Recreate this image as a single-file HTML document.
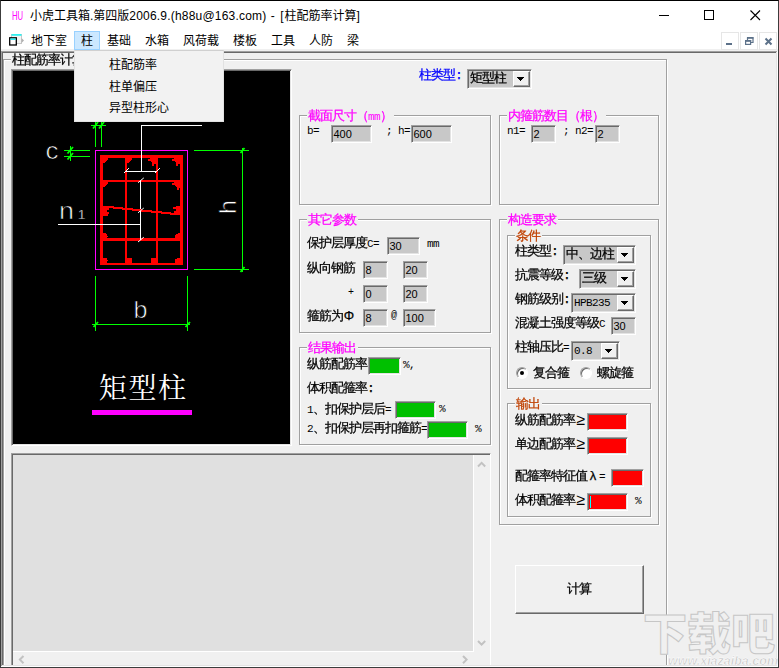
<!DOCTYPE html>
<html lang="zh-CN"><head><meta charset="utf-8"><title>小虎工具箱</title>
<style>
*{box-sizing:border-box;margin:0;padding:0}
html,body{width:779px;height:668px;overflow:hidden;background:#f0f0f0}
body{position:relative;font:12px/12px "Liberation Sans","Noto Sans CJK SC",sans-serif;color:#000}
.a{position:absolute}
.t{position:absolute;white-space:nowrap;font:13px/12px "Liberation Mono","WenQuanYi Zen Hei",monospace;letter-spacing:-1px;-webkit-text-stroke:.25px;color:#000}
.gl i,.t i,.cb i{font-style:normal;font-size:11px;letter-spacing:-.6px;-webkit-text-stroke:0}
.t u{text-decoration:none;display:inline-block;width:12px;text-align:center;letter-spacing:0;font-family:"Liberation Sans","WenQuanYi Zen Hei",sans-serif}
.t u.g{font-size:16px;line-height:12px;vertical-align:-1px;-webkit-text-stroke:0}
.m{color:#f0f}
.o{color:#c04000}
.bl{color:#00f}
.ui{position:absolute;white-space:nowrap;font:12px/12px "Liberation Sans","Noto Sans CJK SC",sans-serif;color:#000}
.gb{position:absolute;border:1px solid #a0a0a0;box-shadow:inset 1px 1px 0 #fff,1px 1px 0 #fff}
.gl{position:absolute;white-space:nowrap;font:13px/12px "Liberation Mono","WenQuanYi Zen Hei",monospace;letter-spacing:-1px;-webkit-text-stroke:.25px;background:#f0f0f0;padding:0 2px 0 1px}
.tb{position:absolute;background:#c8c8c8;border:1px solid;border-color:#a0a0a0 #fff #fff #a0a0a0;box-shadow:inset 1px 1px 0 #696969,inset -1px -1px 0 #e3e3e3;font:11px/11px "Liberation Sans",sans-serif;padding:3px 0 0 1.500px;white-space:nowrap;overflow:hidden}
.cb{position:absolute;background:#c8c8c8;border:1px solid;border-color:#a0a0a0 #fff #fff #a0a0a0;box-shadow:inset 1px 1px 0 #696969,inset -1px -1px 0 #e3e3e3;font:13px/12px "Liberation Mono","WenQuanYi Zen Hei",monospace;letter-spacing:-1px;-webkit-text-stroke:.25px;padding:3px 0 0 2px;white-space:nowrap;overflow:hidden}
.btn{position:absolute;right:1px;top:1px;bottom:1px;width:17px;background:#f0f0f0;border:1px solid;border-color:#fff #696969 #696969 #fff;box-shadow:inset -1px -1px 0 #a0a0a0}
.btn svg{position:absolute;left:3px;top:5px}
.rd{position:absolute;width:12px;height:12px;border-radius:50%;background:#fff;border:1px solid;border-color:#a0a0a0 #fff #fff #a0a0a0;box-shadow:inset 1px 1px 0 #696969}
</style></head>
<body>
<div class="a" style="left:0;top:0;width:779px;height:51px;background:#fff"></div>
<div class="a" style="left:12px;top:10px;font:12px/12px 'Liberation Sans',sans-serif;color:#f0f;transform:scaleX(.64);transform-origin:0 0">HU</div>
<div class="ui" style="left:30px;top:10px;font-size:12px">小虎工具箱.第四版<span style="letter-spacing:.2px">2006.9.(h88u@163.com)</span><span style="letter-spacing:1px"> - [</span>柱配筋率计算]</div>
<svg class="a" style="left:650px;top:5px" width="120" height="20" viewBox="650 5 120 20" shape-rendering="crispEdges"><path d="M659 15.5h10" stroke="#000" fill="none"/><rect x="704.5" y="10.5" width="9" height="9" stroke="#000" fill="none"/><path d="M750.5 10.5l9.5 9.5M760 10.5l-9.5 9.5" stroke="#000" fill="none" shape-rendering="auto" stroke-width="1.1"/></svg>
<div class="a" style="left:1px;top:49px;width:777px;height:2px;background:#f0f0f0"></div>
<svg class="a" style="left:8px;top:33px" width="17" height="13" viewBox="0 0 17 13"><rect x="3.5" y="1.5" width="10" height="9" fill="#f4f4f4" stroke="#c8c8c8"/><rect x="3.500" y="1" width="10" height="1.800" fill="#30f0f0"/><path d="M13.5 5l2.5 2.5-2.5 2.5z" fill="#b0b0b0"/><rect x="1.700" y="4.800" width="6.600" height="7.200" fill="#fff" stroke="#000" stroke-width="1.300"/><rect x="2.300" y="5.500" width="5.400" height="1.300" fill="#00e8f0"/></svg>
<div class="a" style="left:74px;top:31px;width:26px;height:19px;background:#cce8ff;border:1px solid #99d1ff"></div>
<div class="ui" style="left:31px;top:35px">地下室</div>
<div class="ui" style="left:81px;top:35px">柱</div>
<div class="ui" style="left:107px;top:35px">基础</div>
<div class="ui" style="left:145px;top:35px">水箱</div>
<div class="ui" style="left:183px;top:35px">风荷载</div>
<div class="ui" style="left:233px;top:35px">楼板</div>
<div class="ui" style="left:271px;top:35px">工具</div>
<div class="ui" style="left:309px;top:35px">人防</div>
<div class="ui" style="left:347px;top:35px">梁</div>
<div class="a" style="left:721px;top:32px;width:18px;height:18px;border:1px solid #e6e6e6;background:#fff"></div>
<div class="a" style="left:740px;top:32px;width:18px;height:18px;border:1px solid #e6e6e6;background:#fff"></div>
<div class="a" style="left:759px;top:32px;width:18px;height:18px;border:1px solid #e6e6e6;background:#fff"></div>
<svg class="a" style="left:721px;top:32px" width="56" height="18" viewBox="721 32 56 18"><rect x="726" y="43" width="6" height="2" fill="#5c7189"/><path d="M747.5 40v-2.2h5.5v4.7h-2" fill="none" stroke="#5c7189" stroke-width="1.2"/><rect x="747" y="37" width="6.5" height="1.6" fill="#5c7189"/><rect x="745.6" y="40.6" width="5" height="3.8" fill="none" stroke="#5c7189" stroke-width="1.2"/><rect x="745" y="40" width="6.2" height="1.8" fill="#5c7189"/><path d="M765.5 38.5l6 6M771.5 38.5l-6 6" stroke="#5c7189" stroke-width="2" fill="none"/></svg>
<div class="a" style="left:1px;top:51px;width:776px;height:1px;background:#a0a0a0"></div>
<div class="a" style="left:2px;top:52px;width:774px;height:1px;background:#696969"></div>
<div class="a" style="left:1px;top:51px;width:1px;height:615px;background:#a0a0a0"></div>
<div class="a" style="left:2px;top:52px;width:1px;height:613px;background:#696969"></div>
<div class="a" style="left:776px;top:52px;width:1px;height:614px;background:#e3e3e3"></div>
<div class="a" style="left:777px;top:51px;width:1px;height:616px;background:#fff"></div>
<div class="gb" style="left:3px;top:59px;width:664px;height:640px"></div>
<div class="gl" style="left:11px;top:55px;color:#000">柱配筋率计算</div>
<div class="a" style="left:11px;top:69px;width:281px;height:377px;background:#000;border:1px solid;border-color:#a0a0a0 #fff #fff #a0a0a0;box-shadow:inset 1px 1px 0 #696969,inset -1px -1px 0 #e3e3e3"></div>
<svg class="a" style="left:13px;top:71px" width="277" height="373" viewBox="13 71 277 373">
<g shape-rendering="crispEdges" fill="none">
<!-- green dimension lines -->
<g stroke="#00ff00" stroke-width="1">
<path d="M95.500 122v25M101.500 122v25M91 125.500h15"/>
<path d="M64 150.500h26M64 156.500h26M70.500 146v15"/>
<path d="M194 150.500h55M194 269.500h55M242.500 148v124"/>
<path d="M95.500 276v55M187.500 276v55M92 324.500h98"/>
</g>
<!-- magenta outline -->
<rect x="95.500" y="150.500" width="92" height="119" stroke="#ff00ff"/>
<!-- red stirrups -->
<g fill="#ff0000" stroke="none">
<rect x="100" y="155" width="3" height="110"/><rect x="180" y="155" width="3" height="110"/>
<rect x="100" y="155" width="83" height="3"/><rect x="100" y="263" width="83" height="2"/>
<rect x="125" y="158" width="2" height="105"/><rect x="156" y="158" width="2" height="105"/>
<rect x="103" y="180" width="77" height="2"/><rect x="103" y="238" width="77" height="3"/>
</g>
<!-- white leaders -->
<g stroke="#ffffff" stroke-width="1">
<path d="M141.500 125v46M141 125.500h61M126 171.500h31"/>
<path d="M140.500 181v59M58 224.500h83"/>
</g>
</g>
<path d="M103 206h11v2h-11zM113 207h10v2h-10zM122 208h11v2h-11zM132 209h10v2h-10zM141 210h11v2h-11zM151 211h11v2h-11zM161 212h10v2h-10zM170 213h11v2h-11z" fill="#ff0000" shape-rendering="crispEdges"/>
<!-- tick marks -->
<g stroke="#ffffff" stroke-width="1" fill="none">
<path d="M124 173l5-5M155 173l5-5M138 182.700l5.800-4.800M138 212.800l5.800-4.800M138 242l5.800-4.800"/>
</g>
<g stroke="#00ff00" stroke-width="1.800" fill="none">
<path d="M93 128.500l5-6.500M99 128.500l5-6.500"/>
<path d="M67.500 153.500l5.500-6.500M67.500 159.500l5.500-6.500"/>
<path d="M240.500 153l4-5M240.500 272l4-5M93.500 327l4.500-5M185.500 327l4.500-5"/>
</g>
<!-- rebar dots -->
<g fill="#ff0000" shape-rendering="crispEdges">
<path d="M103 158h5v2h-1v1h-1v1h-1v1h-2zM127 158h5v2h-1v1h-1v1h-1v1h-2zM103 182h5v2h-1v1h-1v1h-1v1h-2z"/>
<path d="M156 158H150V159H148V161H151V162H152V166H154V164H156ZM180 158H174V159H172V161H175V162H176V166H178V164H180ZM180 182H174V183H172V185H175V186H176V187H177V190H179V188H180Z"/>
<path d="M103 206h5v2h1v2h-2v2h2v2h-1v2h-5zM180 206h-4v1h-3v2h3v2h-2v2h2v2h4z"/>
<path d="M103 233h3v1h1v2h1v1h-1v1h-4zM180 233h-2v1h-2v1h-1v3h5z"/>
<path d="M103 258h4v2h1v1h-1v2h-4zM127 258h5v5h-5zM156 258h-5v5h5zM180 258h-3v1h-2v4h5z"/>
</g>
<!-- CAD letters (real text) -->
<g fill="#ffffff" stroke="#000" stroke-width=".700" font-family="Liberation Sans, sans-serif">
<text x="45.500" y="159" font-size="24" textLength="13" lengthAdjust="spacingAndGlyphs">c</text>
<text x="59" y="218.600" font-size="24" textLength="15" lengthAdjust="spacingAndGlyphs">n</text>
<text x="133.500" y="318" font-size="24" textLength="14" lengthAdjust="spacingAndGlyphs">b</text>
<text transform="translate(236 214) rotate(-90)" font-size="24" textLength="14" lengthAdjust="spacingAndGlyphs" x="0" y="0">h</text>
</g>
<text x="78" y="218.700" font-size="13" font-family="Liberation Sans, sans-serif" fill="#fff" stroke="#000" stroke-width=".300">1</text>
<text x="99" y="397.500" font-family="Liberation Serif, Noto Serif CJK SC, serif" font-size="28" fill="#ffffff" letter-spacing="1.500">矩型柱</text>
<rect x="92" y="410" width="100" height="5" fill="#ff00ff" shape-rendering="crispEdges"/>
</svg>

<div class="a" style="left:11px;top:453px;width:480px;height:230px;background:#e0e0e0;border:1px solid;border-color:#a0a0a0 #fff #fff #a0a0a0;box-shadow:inset 1px 1px 0 #696969"></div>
<div class="a" style="left:473px;top:455px;width:17px;height:210px;background:#f0f0f0"></div>
<div class="a" style="left:13px;top:651px;width:477px;height:14px;background:#f0f0f0"></div>
<div class="a" style="left:473px;top:455px;width:1px;height:197px;background:#fff"></div>
<div class="a" style="left:13px;top:651px;width:461px;height:1px;background:#fff"></div>
<svg class="a" style="left:13px;top:455px" width="478" height="210" viewBox="13 455 478 210" fill="none" stroke="#c2c2c2" stroke-width="2"><path d="M478 466.5l3.6-3.6 3.6 3.6"/><path d="M478 641l3.6 3.6 3.6-3.6"/><path d="M463 656l3.6 3.6-3.6 3.6"/><path d="M23.5 656l-3.6 3.6 3.6 3.6"/></svg>
<div class="t bl" style="left:419px;top:70px">柱类型:</div>
<div class="cb" style="left:467px;top:69px;width:65px;height:20px">矩型柱<span class="btn"><svg width="7" height="4" viewBox="0 0 7 4" shape-rendering="crispEdges"><path d="M0 0h7v1h-1v1h-1v1h-1v1h-1v-1h-1v-1h-1v-1h-1z"/></svg></span></div>
<div class="gb" style="left:299px;top:115px;width:192px;height:90px"></div>
<div class="gl m" style="left:307px;top:111px">截面尺寸（<i>mm</i>）</div>
<div class="t " style="left:307px;top:125px"><i>b=</i></div>
<div class="tb" style="left:331px;top:125px;width:41px;height:18px;">400</div>
<div class="t " style="left:386px;top:125px"><i>; h=</i></div>
<div class="tb" style="left:411px;top:125px;width:41px;height:18px;">600</div>
<div class="gb" style="left:499px;top:115px;width:160px;height:90px"></div>
<div class="gl m" style="left:507px;top:111px">内箍筋数目（根）</div>
<div class="t " style="left:507px;top:125px"><i>n1=</i></div>
<div class="tb" style="left:531px;top:125px;width:25px;height:18px;">2</div>
<div class="t " style="left:563px;top:125px"><i>; n2=</i></div>
<div class="tb" style="left:595px;top:125px;width:25px;height:18px;">2</div>
<div class="gb" style="left:299px;top:219px;width:192px;height:114px"></div>
<div class="gl m" style="left:307px;top:215px">其它参数</div>
<div class="t " style="left:307px;top:238px">保护层厚度<i>C=</i></div>
<div class="tb" style="left:387px;top:237px;width:33px;height:18px;">30</div>
<div class="t " style="left:427px;top:238px"><i>mm</i></div>
<div class="t " style="left:307px;top:263px">纵向钢筋</div>
<div class="tb" style="left:363px;top:261px;width:25px;height:18px;">8</div>
<div class="tb" style="left:403px;top:261px;width:25px;height:18px;">20</div>
<div class="t " style="left:348px;top:286px"><i style="font-size:10px">+</i></div>
<div class="tb" style="left:363px;top:285px;width:25px;height:18px;">0</div>
<div class="tb" style="left:403px;top:285px;width:25px;height:18px;">20</div>
<div class="t " style="left:307px;top:310px">箍筋为<u>Φ</u></div>
<div class="tb" style="left:363px;top:309px;width:25px;height:18px;">8</div>
<div class="t " style="left:391px;top:309px"><i style="font-size:10px">@</i></div>
<div class="tb" style="left:403px;top:309px;width:33px;height:18px;">100</div>
<div class="gb" style="left:299px;top:347px;width:192px;height:98px"></div>
<div class="gl m" style="left:307px;top:343px">结果输出</div>
<div class="t " style="left:307px;top:359px">纵筋配筋率</div>
<div class="tb" style="left:368px;top:357px;width:33px;height:18px;background:#00c000"></div>
<div class="t " style="left:403px;top:359px"><i>%,</i></div>
<div class="t " style="left:307px;top:383px">体积配箍率:</div>
<div class="t " style="left:307px;top:404px"><i>1</i>、扣保护层后<i>=</i></div>
<div class="tb" style="left:395px;top:401px;width:41px;height:18px;background:#00c000"></div>
<div class="t " style="left:439px;top:403px"><i>%</i></div>
<div class="t " style="left:307px;top:423px"><i>2</i>、扣保护层再扣箍筋<i>=</i></div>
<div class="tb" style="left:427px;top:421px;width:41px;height:18px;background:#00c000"></div>
<div class="t " style="left:475px;top:423px"><i>%</i></div>
<div class="gb" style="left:499px;top:219px;width:160px;height:306px"></div>
<div class="gl m" style="left:507px;top:215px">构造要求</div>
<div class="gb" style="left:507px;top:235px;width:144px;height:154px"></div>
<div class="gl o" style="left:515px;top:231px">条件</div>
<div class="t " style="left:515px;top:246px">柱类型:</div>
<div class="cb" style="left:563px;top:245px;width:73px;height:20px">中、边柱<span class="btn"><svg width="7" height="4" viewBox="0 0 7 4" shape-rendering="crispEdges"><path d="M0 0h7v1h-1v1h-1v1h-1v1h-1v-1h-1v-1h-1v-1h-1z"/></svg></span></div>
<div class="t " style="left:515px;top:270px">抗震等级:</div>
<div class="cb" style="left:579px;top:269px;width:57px;height:20px">三级<span class="btn"><svg width="7" height="4" viewBox="0 0 7 4" shape-rendering="crispEdges"><path d="M0 0h7v1h-1v1h-1v1h-1v1h-1v-1h-1v-1h-1v-1h-1z"/></svg></span></div>
<div class="t " style="left:515px;top:294px">钢筋级别:</div>
<div class="cb" style="left:571px;top:293px;width:65px;height:20px"><i>HPB235</i><span class="btn"><svg width="7" height="4" viewBox="0 0 7 4" shape-rendering="crispEdges"><path d="M0 0h7v1h-1v1h-1v1h-1v1h-1v-1h-1v-1h-1v-1h-1z"/></svg></span></div>
<div class="t " style="left:515px;top:318px">混凝土强度等级<i>C</i></div>
<div class="tb" style="left:611px;top:317px;width:25px;height:18px;">30</div>
<div class="t " style="left:515px;top:342px">柱轴压比<i>=</i></div>
<div class="cb" style="left:571px;top:341px;width:49px;height:20px"><i>0.8</i><span class="btn"><svg width="7" height="4" viewBox="0 0 7 4" shape-rendering="crispEdges"><path d="M0 0h7v1h-1v1h-1v1h-1v1h-1v-1h-1v-1h-1v-1h-1z"/></svg></span></div>
<div class="rd" style="left:516px;top:367px"></div><div class="a" style="left:520px;top:371px;width:4px;height:4px;border-radius:50%;background:#000"></div>
<div class="t " style="left:533px;top:368px">复合箍</div>
<div class="rd" style="left:580px;top:367px"></div>
<div class="t " style="left:597px;top:368px">螺旋箍</div>
<div class="gb" style="left:507px;top:403px;width:144px;height:114px"></div>
<div class="gl o" style="left:515px;top:399px">输出</div>
<div class="t " style="left:515px;top:414px">纵筋配筋率<u class="g">≥</u></div>
<div class="tb" style="left:587px;top:413px;width:41px;height:18px;background:#f00"></div>
<div class="t " style="left:515px;top:438px">单边配筋率<u class="g">≥</u></div>
<div class="tb" style="left:587px;top:437px;width:41px;height:18px;background:#f00"></div>
<div class="t " style="left:515px;top:470px">配箍率特征值<u>λ</u><i>=</i></div>
<div class="tb" style="left:611px;top:469px;width:33px;height:18px;background:#f00"></div>
<div class="t " style="left:515px;top:494px">体积配箍率<u class="g">≥</u></div>
<div class="tb" style="left:587px;top:493px;width:41px;height:18px;background:#f00"></div>
<div class="a" style="left:590px;top:496px;width:1px;height:12px;background:#0ff"></div>
<div class="t " style="left:635px;top:495px"><i>%</i></div>
<div class="a" style="left:515px;top:565px;width:129px;height:49px;background:#f0f0f0;border:1px solid;border-color:#fff #696969 #696969 #fff;box-shadow:inset -1px -1px 0 #a0a0a0"></div>
<div class="t " style="left:567px;top:584px">计算</div>
<div class="a" style="left:643px;top:611px;font:900 44px/48px 'Liberation Sans','Noto Sans CJK SC',sans-serif;color:#f0f0f0;-webkit-text-stroke:1px #c6c6c6;white-space:nowrap;letter-spacing:0">下载吧</div>
<div class="a" style="left:668px;top:654px;font:bold italic 12.500px/14px 'Liberation Sans',sans-serif;color:#c4c4c4;-webkit-text-stroke:.5px #fff;white-space:nowrap">www.xiazaiba.com</div>
<div class="a" style="left:2px;top:665px;width:775px;height:1px;background:#e3e3e3"></div>
<div class="a" style="left:1px;top:666px;width:777px;height:1px;background:#fff"></div>
<div class="a" style="left:74px;top:50px;width:150px;height:72px;background:#f2f2f2;border:1px solid #e2e2e2;border-top-color:#d0d0d0"></div>
<div class="ui" style="left:109px;top:59px">柱配筋率</div>
<div class="ui" style="left:109px;top:81px">柱单偏压</div>
<div class="ui" style="left:109px;top:102px">异型柱形心</div>
<div class="a" style="left:0;top:0;width:779px;height:668px;border:1px solid #3c3c3c;border-top-color:#000;pointer-events:none"></div>
</body></html>
